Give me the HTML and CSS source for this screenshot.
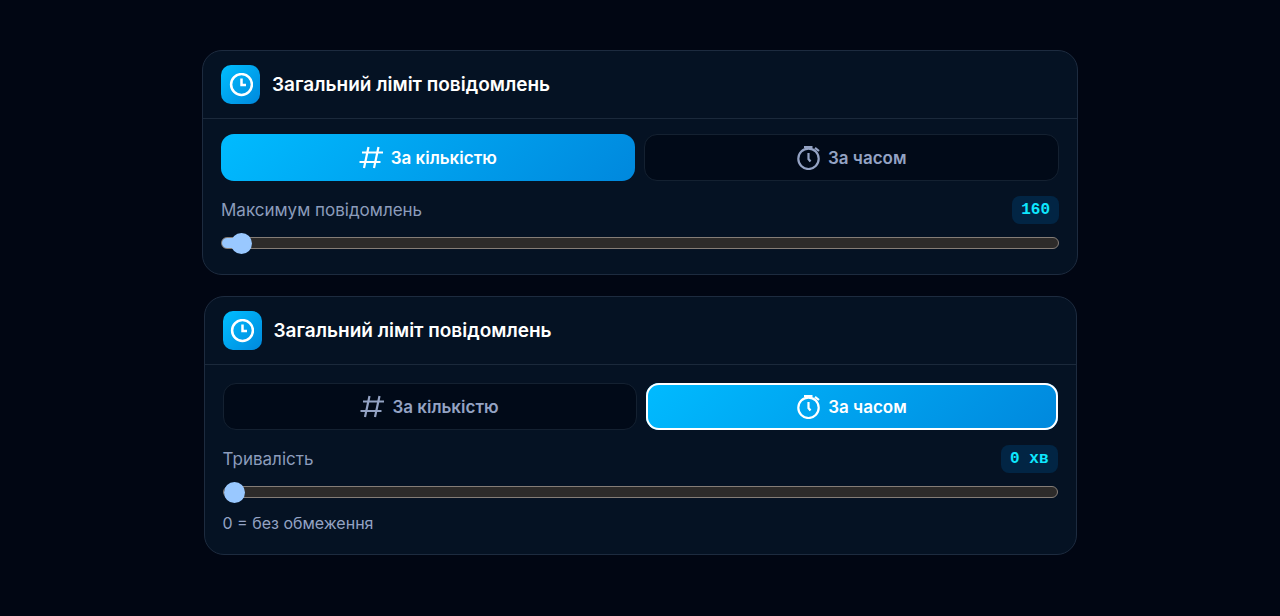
FILE: index.html
```html
<!DOCTYPE html>
<html lang="uk">
<head>
    <meta charset="UTF-8">
    <meta name="viewport" content="width=device-width, initial-scale=1.0">
    <title>Ліміт повідомлень</title>
    <link rel="stylesheet" href="styles.css">
</head>
<body>
    <!-- shared icons -->
    <svg class="sprite" aria-hidden="true">
        <symbol id="icon-clock" viewBox="0 0 24 24">
            <circle cx="12.5" cy="11.5" r="10.4"/>
            <path d="M12.5 5.5V12H17"/>
        </symbol>
        <symbol id="icon-hash" viewBox="0 0 24 24">
            <path d="M9.5 1L5 22M19.5 1L15 22M3 6.5H24M.5 16H21.5"/>
        </symbol>
        <symbol id="icon-timer" viewBox="0 0 24 24">
            <circle cx="12.5" cy="12.8" r="10.2"/>
            <path d="M8 .8H16.5M12.5 1V3M12.5 7V13L14.5 15.5M19 1.8L23 5"/>
        </symbol>
    </svg>

    <main class="page">
        <section class="card">
            <header class="card-header">
                <span class="card-icon"><svg><use href="#icon-clock"/></svg></span>
                <h2>Загальний ліміт повідомлень</h2>
            </header>
            <div class="card-body">
                <div class="tabs">
                    <button class="tab active" type="button"><svg><use href="#icon-hash"/></svg>За кількістю</button>
                    <button class="tab" type="button"><svg><use href="#icon-timer"/></svg>За часом</button>
                </div>
                <div class="row">
                    <label for="max-messages">Максимум повідомлень</label>
                    <output class="value" for="max-messages">160</output>
                </div>
                <input class="slider filled" type="range" id="max-messages" min="0" max="14400" value="160">
            </div>
        </section>

        <section class="card narrow">
            <header class="card-header">
                <span class="card-icon"><svg><use href="#icon-clock"/></svg></span>
                <h2>Загальний ліміт повідомлень</h2>
            </header>
            <div class="card-body">
                <div class="tabs">
                    <button class="tab" type="button"><svg><use href="#icon-hash"/></svg>За кількістю</button>
                    <button class="tab active outlined" type="button"><svg><use href="#icon-timer"/></svg>За часом</button>
                </div>
                <div class="row">
                    <label for="duration">Тривалість</label>
                    <output class="value" for="duration">0 хв</output>
                </div>
                <input class="slider" type="range" id="duration" min="0" max="1440" value="0">
                <p class="hint">0 = без обмеження</p>
            </div>
        </section>
    </main>
</body>
</html>
```
FILE: styles.css
```css
* {
    box-sizing: border-box;
}
body {
    margin: 0;
    min-height: 100vh;
    background-color: #010613;
    color: #fff;
    font-family: Inter, sans-serif;
}
.sprite {
    display: none;
}
svg {
    fill: none;
    stroke: currentColor;
    stroke-width: 2.2;
    width: 24px;
    height: 24px;
    overflow: visible;
}
.page {
    display: flex;
    flex-direction: column;
    align-items: center;
    gap: 21px;
    padding: 50px 20px;
}
.card {
    width: 100%;
    max-width: 876px;
    background-color: #051223;
    border: 1px solid #1d2b3f;
    border-radius: 20px;
}
.card.narrow {
    max-width: 873px;
}
.card-header {
    display: flex;
    align-items: center;
    gap: 12px;
    padding: 14px 18px;
    border-bottom: 1px solid #1b293b;
}
.card-icon {
    display: flex;
    align-items: center;
    justify-content: center;
    width: 39px;
    height: 39px;
    border-radius: 10px;
    background: linear-gradient(135deg, #00bfff, #0088dd);
}
.card-icon svg {
    stroke-width: 2.5;
}
h2 {
    margin: 0;
    font-size: 19px;
    font-weight: 600;
    line-height: 24px;
}
.card-body {
    padding: 15px 18px 25px;
}
.narrow .card-body {
    padding: 18px 18px 20px;
}
.tabs {
    display: flex;
    gap: 9px;
    margin-bottom: 15px;
}
.tab {
    flex: 1;
    display: flex;
    align-items: center;
    justify-content: center;
    gap: 8px;
    height: 47px;
    border: 1px solid #142131;
    border-radius: 13px;
    background-color: #010a18;
    color: #94a3c4;
    font-family: inherit;
    font-size: 17px;
    font-weight: 600;
    cursor: pointer;
}
.tab.active {
    border: none;
    background: linear-gradient(135deg, #00bbff, #0088dd);
    color: #fff;
}
.tab.outlined {
    box-shadow: inset 0 0 0 2px #fff;
}
.row {
    display: flex;
    align-items: center;
    justify-content: space-between;
    margin-bottom: 13px;
    color: #8c9cbb;
    font-size: 17px;
}
.value {
    padding: 0 9px;
    border-radius: 8px;
    background-color: #022544;
    color: #0ee7ff;
    font-family: "Liberation Mono", monospace;
    font-size: 16px;
    font-weight: 700;
    line-height: 28px;
}
.slider {
    -webkit-appearance: none;
    appearance: none;
    display: block;
    width: 100%;
    height: 12px;
    margin: 0;
    border: 1px solid #857d77;
    border-radius: 6px;
    background: #2d2b2a;
    cursor: pointer;
}
.slider.filled {
    background: linear-gradient(to right, #99c8ff 20px, #2d2b2a 20px);
}
.slider::-webkit-slider-thumb {
    -webkit-appearance: none;
    width: 21px;
    height: 21px;
    border-radius: 50%;
    background: #99c8ff;
}
.hint {
    margin: 14px 0 0;
    color: #94a3c4;
    font-size: 16px;
    line-height: 22px;
}
```
